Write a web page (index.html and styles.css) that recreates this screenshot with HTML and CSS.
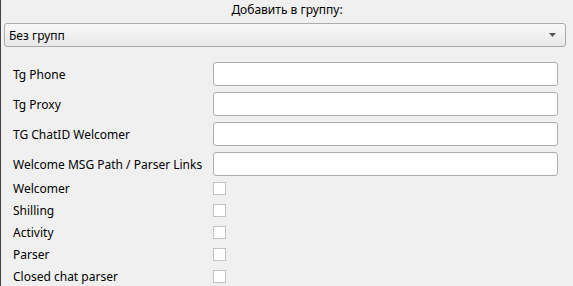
FILE: index.html
```html
<!DOCTYPE html>
<html lang="ru">

<head>
  <meta charset="UTF-8">
  <meta name="viewport" content="width=device-width, initial-scale=1.0">
  <title>Добавить в группу</title>
  <link rel="stylesheet" href="styles.css">
</head>

<body>
  <div class="window">
    <div class="title">Добавить в группу:</div>

    <div class="combo">
      <span>Без групп</span>
      <svg class="arrow" width="7" height="4" viewBox="0 0 7 4"><path d="M0 0H7L3.5 4Z" fill="#555"/></svg>
    </div>

    <div class="form">
      <div class="fields">
        <div class="row">
          <label for="phone">Tg Phone</label>
          <input type="text" id="phone">
        </div>
        <div class="row">
          <label for="proxy">Tg Proxy</label>
          <input type="text" id="proxy">
        </div>
        <div class="row">
          <label for="chatid">TG ChatID Welcomer</label>
          <input type="text" id="chatid">
        </div>
        <div class="row">
          <label for="msgpath">Welcome MSG Path / Parser Links</label>
          <input type="text" id="msgpath">
        </div>
      </div>

      <div class="checks">
        <div class="check-row">
          <label for="welcomer">Welcomer</label>
          <input type="checkbox" id="welcomer">
        </div>
        <div class="check-row">
          <label for="shilling">Shilling</label>
          <input type="checkbox" id="shilling">
        </div>
        <div class="check-row">
          <label for="activity">Activity</label>
          <input type="checkbox" id="activity">
        </div>
        <div class="check-row">
          <label for="parser">Parser</label>
          <input type="checkbox" id="parser">
        </div>
        <div class="check-row">
          <label for="closed">Closed chat parser</label>
          <input type="checkbox" id="closed">
        </div>
      </div>
    </div>
  </div>
</body>

</html>
```

FILE: styles.css
```css
html,
body {
  margin: 0;
  height: 100%;
  overflow: hidden;
}

body {
  font-family: "Noto Sans", "DejaVu Sans", sans-serif;
  font-size: 12px;
  color: #000;
  background-color: #f0f0f0;
}

.window {
  height: 100%;
  border-left: 1px solid #444;
  box-sizing: border-box;
}

.title {
  height: 22px;
  line-height: 20px;
  text-align: center;
}

.combo {
  display: flex;
  align-items: center;
  justify-content: space-between;
  height: 24px;
  margin: 1px 7px 0 3px;
  padding: 0 9px 0 4px;
  box-sizing: border-box;
  border: 1px solid #acacac;
  border-radius: 3px;
  background: linear-gradient(#f8f8f8, #e8e8e8);
}

.form {
  padding: 15px 15px 0 12px;
}

.fields {
  display: flex;
  flex-direction: column;
  gap: 6px;
}

.row {
  display: flex;
  align-items: center;
  height: 24px;
}

.row label,
.check-row label {
  width: 200px;
  flex-shrink: 0;
}

.row input {
  flex: 1;
  height: 24px;
  margin: 0;
  box-sizing: border-box;
  border: 1px solid #adadad;
  border-radius: 3px;
  background-color: #fff;
}

.checks {
  margin-top: 1px;
}

.check-row {
  display: flex;
  align-items: center;
  height: 22px;
}

.check-row input {
  appearance: none;
  width: 13px;
  height: 13px;
  margin: 0;
  box-sizing: border-box;
  border: 1px solid #c2c2c2;
  background-color: #fff;
}
```
